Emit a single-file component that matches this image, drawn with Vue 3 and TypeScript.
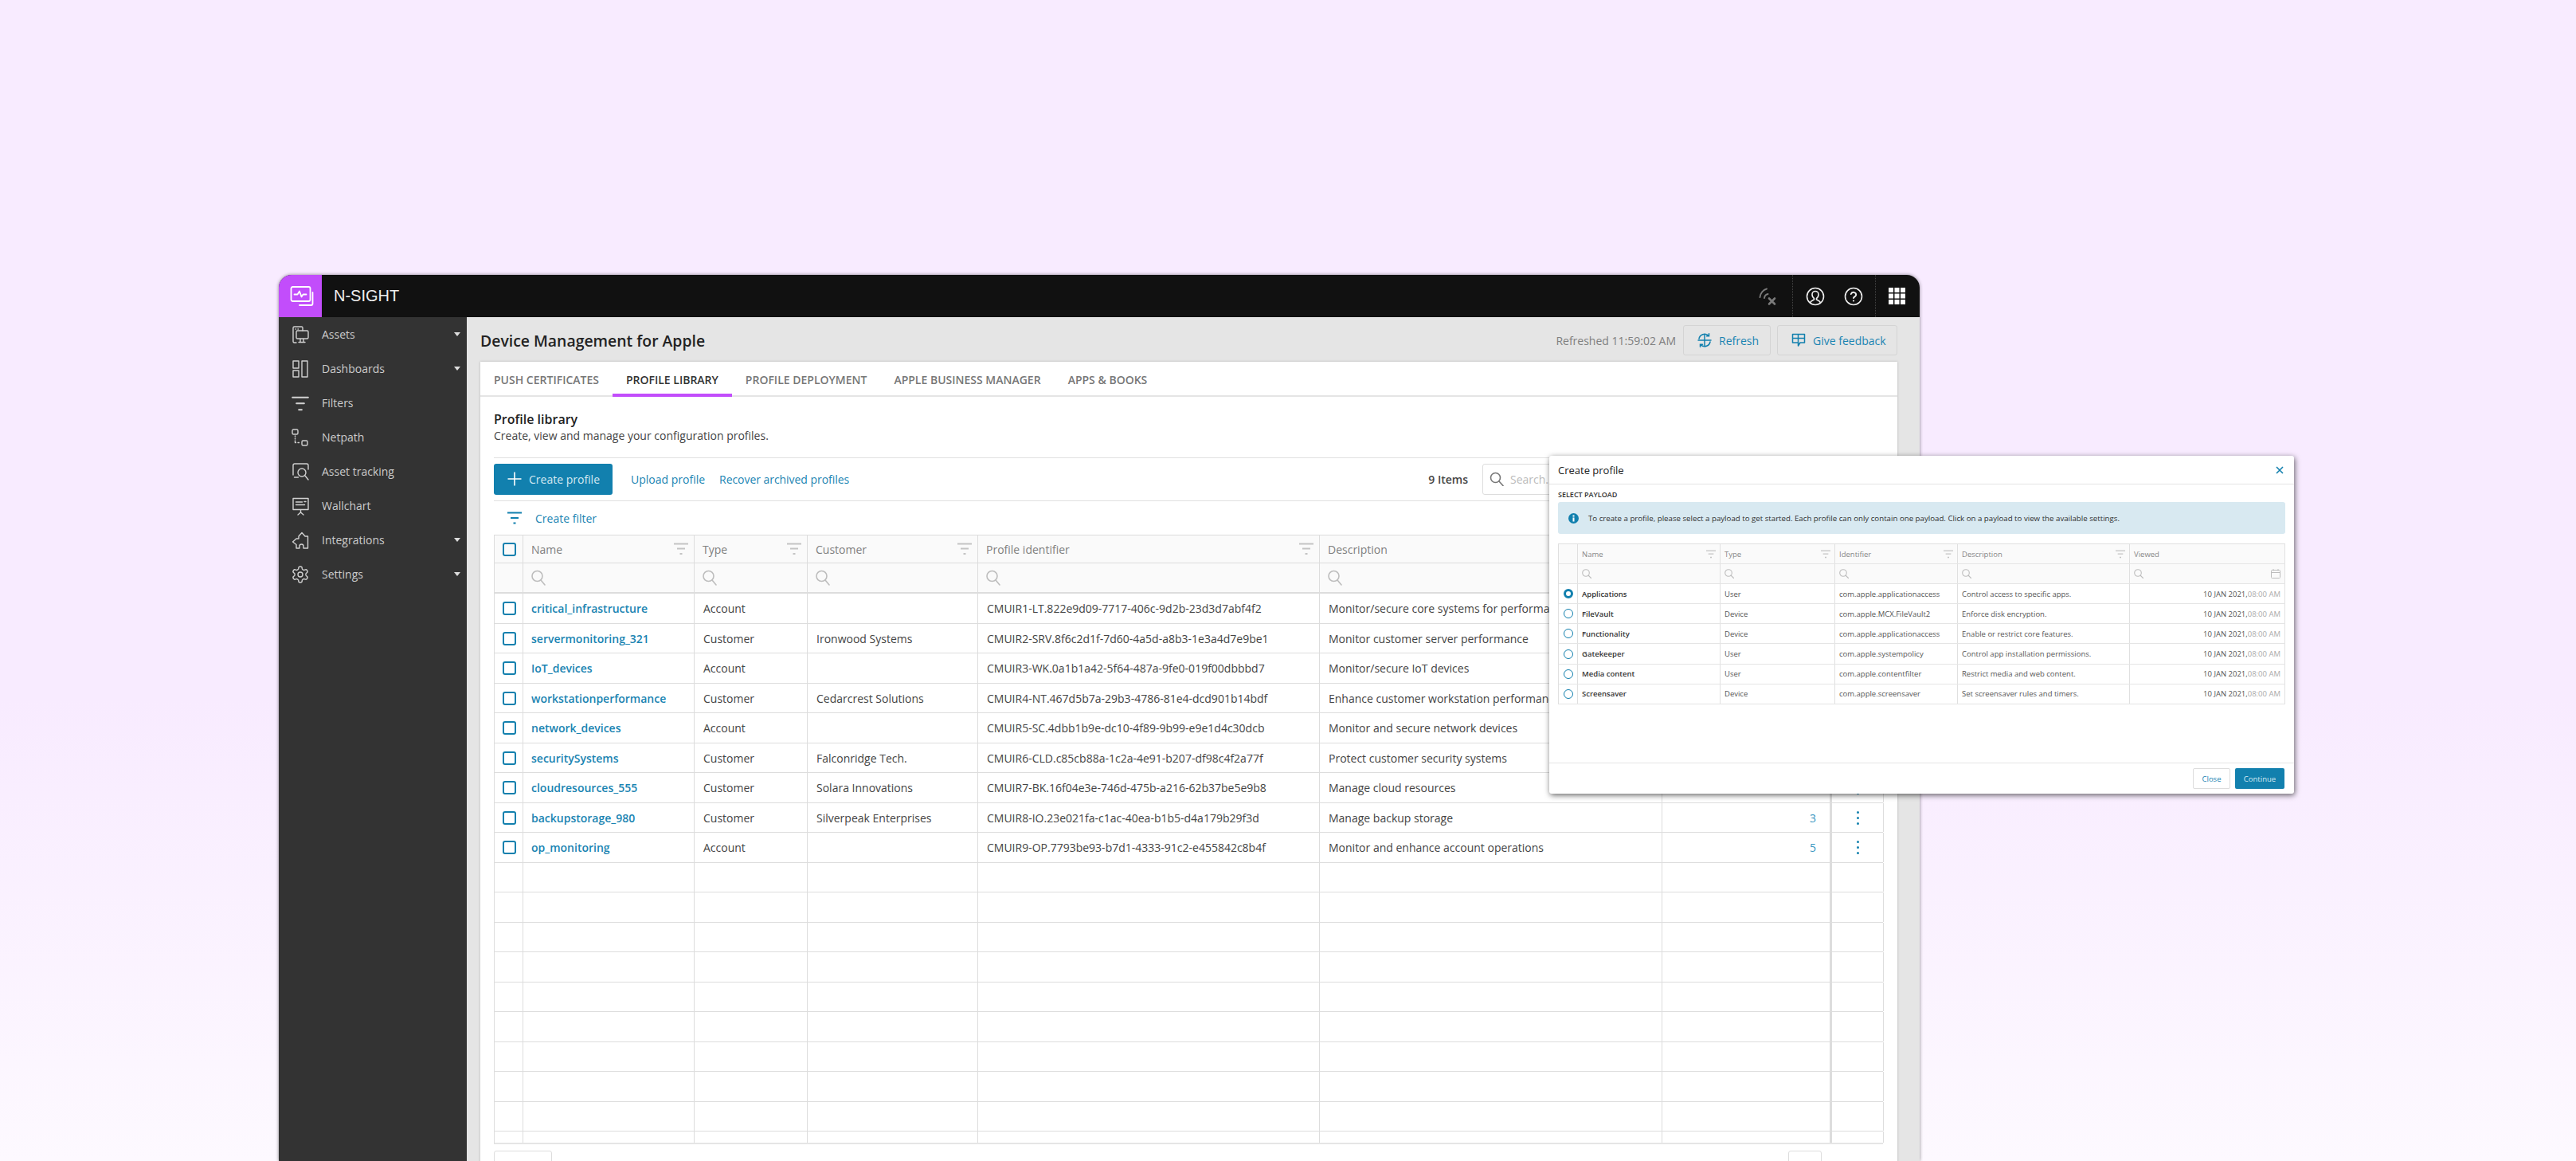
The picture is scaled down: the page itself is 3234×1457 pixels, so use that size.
<script setup lang="ts">
interface NavItem {
  label: string;
  caret: boolean;
  paths: string[];
}

interface Profile {
  name: string;
  type: string;
  customer: string;
  identifier: string;
  description: string;
  count: number;
}

interface Payload {
  name: string;
  type: string;
  identifier: string;
  description: string;
}

const gear =
  'M12.22 2h-.44a2 2 0 0 0-2 2v.18a2 2 0 0 1-1 1.73l-.43.25a2 2 0 0 1-2 0l-.15-.08a2 2 0 0 0-2.73.73l-.22.38a2 2 0 0 0 .73 2.73l.15.1a2 2 0 0 1 1 1.72v.51a2 2 0 0 1-1 1.74l-.15.09a2 2 0 0 0-.73 2.73l.22.38a2 2 0 0 0 2.73.73l.15-.08a2 2 0 0 1 2 0l.43.25a2 2 0 0 1 1 1.73V20a2 2 0 0 0 2 2h.44a2 2 0 0 0 2-2v-.18a2 2 0 0 1 1-1.73l.43-.25a2 2 0 0 1 2 0l.15.08a2 2 0 0 0 2.73-.73l.22-.39a2 2 0 0 0-.73-2.73l-.15-.08a2 2 0 0 1-1-1.74v-.5a2 2 0 0 1 1-1.74l.15-.09a2 2 0 0 0 .73-2.73l-.22-.38a2 2 0 0 0-2.73-.73l-.15.08a2 2 0 0 1-2 0l-.43-.25a2 2 0 0 1-1-1.73V4a2 2 0 0 0-2-2z';

const navItems: NavItem[] = [
  {
    label: 'Assets',
    caret: true,
    paths: [
      'M7 22H4.5A1.5 1.5 0 0 1 3 20.5v-17A1.5 1.5 0 0 1 4.5 2h9A1.5 1.5 0 0 1 15 3.5V7',
      'M8.5 7h12A1.5 1.5 0 0 1 22 8.5v7a1.5 1.5 0 0 1-1.5 1.5h-12A1.5 1.5 0 0 1 7 15.5v-7A1.5 1.5 0 0 1 8.5 7z',
      'M10 21.5h8',
      'M12 17.5v3.5',
      'M16 17.5v3.5',
      'M6 5h.5',
      'M9 5h.5',
    ],
  },
  {
    label: 'Dashboards',
    caret: true,
    paths: [
      'M3 2h7v9H3z',
      'M3 14h7v8H3z',
      'M14 2h7v20h-7z',
    ],
  },
  {
    label: 'Filters',
    caret: false,
    paths: ['M2 4.5h20', 'M2 5h20', 'M7 12h10', 'M7 12.5h10', 'M10 20h4', 'M10 20.5h4'],
  },
  {
    label: 'Netpath',
    caret: false,
    paths: [
      'M3.5 2h4A1.5 1.5 0 0 1 9 3.5v3A1.5 1.5 0 0 1 7.500 8h-4A1.500 1.500 0 0 1 2 6.500v-3A1.500 1.500 0 0 1 3.500 2z',
      'M15.500 16h4A1.500 1.500 0 0 1 21 17.500v3a1.500 1.500 0 0 1-1.500 1.500h-4a1.500 1.500 0 0 1-1.500-1.500v-3a1.500 1.500 0 0 1 1.500-1.500z',
      'M5.500 10v1',
      'M5.500 13v1',
      'M5.500 16v2.500h1',
      'M9 18.500h1.500',
    ],
  },
  {
    label: 'Asset tracking',
    caret: false,
    paths: [
      'M3 16V4a2 2 0 0 1 2-2h15a2 2 0 0 1 2 2v5',
      'M4.500 19h5',
      'M14 8a5 5 0 1 1 0 10a5 5 0 0 1 0-10z',
      'M18 17l4 5',
    ],
  },
  {
    label: 'Wallchart',
    caret: false,
    paths: [
      'M3 2.500h19v14H3z',
      'M6.500 7h8',
      'M6.500 10.500h11',
      'M17 6.500h2',
      'M12.500 17v3',
      'M9 23l3.500-3l3.500 3',
    ],
  },
  {
    label: 'Integrations',
    caret: true,
    paths: [
      'M7 22v-4.500L2.500 14L7 10h3V7l4-4.500L18 7h3.500v15H16v-2.500a2.500 2.500 0 0 0-5 0V22z',
    ],
  },
  {
    label: 'Settings',
    caret: true,
    paths: [gear, 'M12 9a3 3 0 1 1 0 6a3 3 0 0 1 0-6z'],
  },
];

const tabs = ['PUSH CERTIFICATES', 'PROFILE LIBRARY', 'PROFILE DEPLOYMENT', 'APPLE BUSINESS MANAGER', 'APPS & BOOKS'];

const profiles: Profile[] = [
  { name: 'critical_infrastructure', type: 'Account', customer: '', identifier: 'CMUIR1-LT.822e9d09-7717-406c-9d2b-23d3d7abf4f2', description: 'Monitor/secure core systems for performance', count: 4 },
  { name: 'servermonitoring_321', type: 'Customer', customer: 'Ironwood Systems', identifier: 'CMUIR2-SRV.8f6c2d1f-7d60-4a5d-a8b3-1e3a4d7e9be1', description: 'Monitor customer server performance', count: 2 },
  { name: 'IoT_devices', type: 'Account', customer: '', identifier: 'CMUIR3-WK.0a1b1a42-5f64-487a-9fe0-019f00dbbbd7', description: 'Monitor/secure IoT devices', count: 6 },
  { name: 'workstationperformance', type: 'Customer', customer: 'Cedarcrest Solutions', identifier: 'CMUIR4-NT.467d5b7a-29b3-4786-81e4-dcd901b14bdf', description: 'Enhance customer workstation performance', count: 3 },
  { name: 'network_devices', type: 'Account', customer: '', identifier: 'CMUIR5-SC.4dbb1b9e-dc10-4f89-9b99-e9e1d4c30dcb', description: 'Monitor and secure network devices', count: 2 },
  { name: 'securitySystems', type: 'Customer', customer: 'Falconridge Tech.', identifier: 'CMUIR6-CLD.c85cb88a-1c2a-4e91-b207-df98c4f2a77f', description: 'Protect customer security systems', count: 4 },
  { name: 'cloudresources_555', type: 'Customer', customer: 'Solara Innovations', identifier: 'CMUIR7-BK.16f04e3e-746d-475b-a216-62b37be5e9b8', description: 'Manage cloud resources', count: 1 },
  { name: 'backupstorage_980', type: 'Customer', customer: 'Silverpeak Enterprises', identifier: 'CMUIR8-IO.23e021fa-c1ac-40ea-b1b5-d4a179b29f3d', description: 'Manage backup storage', count: 3 },
  { name: 'op_monitoring', type: 'Account', customer: '', identifier: 'CMUIR9-OP.7793be93-b7d1-4333-91c2-e455842c8b4f', description: 'Monitor and enhance account operations', count: 5 },
];

const emptyRows = 9;

const mainColumns = [
  { label: 'Name', filter: true },
  { label: 'Type', filter: true },
  { label: 'Customer', filter: true },
  { label: 'Profile identifier', filter: true },
  { label: 'Description', filter: true },
];

const payloadColumns = [
  { label: 'Name', filter: true },
  { label: 'Type', filter: true },
  { label: 'Identifier', filter: true },
  { label: 'Description', filter: true },
];

const payloads: Payload[] = [
  { name: 'Applications', type: 'User', identifier: 'com.apple.applicationaccess', description: 'Control access to specific apps.' },
  { name: 'FileVault', type: 'Device', identifier: 'com.apple.MCX.FileVault2', description: 'Enforce disk encryption.' },
  { name: 'Functionality', type: 'Device', identifier: 'com.apple.applicationaccess', description: 'Enable or restrict core features.' },
  { name: 'Gatekeeper', type: 'User', identifier: 'com.apple.systempolicy', description: 'Control app installation permissions.' },
  { name: 'Media content', type: 'User', identifier: 'com.apple.contentfilter', description: 'Restrict media and web content.' },
  { name: 'Screensaver', type: 'Device', identifier: 'com.apple.screensaver', description: 'Set screensaver rules and timers.' },
];
</script>

<template>
  <div class="page">
    <div class="window">
      <!-- Top bar -->
      <header class="topbar">
        <div class="logo">
          <svg width="30" height="28" viewBox="0 0 30 28" fill="none" stroke="#fff" stroke-width="1.8" stroke-linecap="round" stroke-linejoin="round">
            <rect x="1.500" y="2" width="24" height="18" rx="2" />
            <path d="M5.500 11.500h4l2.500-4 2.500 7 2-3h4" />
            <path d="M28.500 9v14a2 2 0 0 1-2 2H12" />
          </svg>
        </div>
        <span class="brand">N-SIGHT</span>
        <div class="top-icons">
          <svg class="top-wifi" width="24" height="24" viewBox="0 0 24 24" fill="none" stroke="#7a7a7a" stroke-linecap="round">
            <path stroke-width="2" d="M1.500 13C2 8 5.500 3.500 10 2.500" />
            <path stroke-width="2" d="M7 14c.3-2.500 2-4.500 4.500-5" />
            <path stroke-width="2.600" d="M13 14.500l7 7M20 14.500l-7 7" />
          </svg>
          <span class="top-sep"></span>
          <svg class="top-user" width="24" height="24" viewBox="0 0 24 24" fill="none" stroke="#eee" stroke-width="1.600">
            <circle cx="12" cy="12" r="10.500" />
            <path d="M5.500 20c.5-2.500 3.500-3 5-4v-1.500C9 13.500 8 11.500 8 9.500a4 4 0 0 1 8 0c0 2-1 4-2.500 5V16c1.500 1 4.500 1.500 5 4" />
          </svg>
          <svg class="top-help" width="24" height="24" viewBox="0 0 24 24" fill="none" stroke="#eee" stroke-width="1.600" stroke-linecap="round">
            <circle cx="12" cy="12" r="10.500" />
            <path stroke-width="2" d="M8.800 9a3.300 3.300 0 0 1 6.400 1c0 2-3.200 2.500-3.200 4" />
            <path stroke-width="2.200" d="M12 17.500h.01" />
          </svg>
          <span class="top-sep"></span>
          <svg class="top-grid" width="21" height="21" viewBox="0 0 21 21" fill="#fff">
            <template v-for="row in 3" :key="row">
              <rect v-for="col in 3" :key="col" :x="(col - 1) * 7.500" :y="(row - 1) * 7.500" width="6" height="6" />
            </template>
          </svg>
        </div>
      </header>

      <div class="body">
        <!-- Sidebar -->
        <nav class="sidebar">
          <a v-for="item in navItems" :key="item.label" class="nav-item">
            <svg width="24" height="24" viewBox="0 0 24 24" fill="none" stroke="#d0d0d0" stroke-width="1.400" stroke-linecap="round" stroke-linejoin="round">
              <path v-for="d in item.paths" :key="d" :d="d" />
            </svg>
            <span class="nav-label">{{ item.label }}</span>
            <span v-if="item.caret" class="nav-caret"></span>
          </a>
        </nav>

        <!-- Main content -->
        <main class="main">
          <div class="main-head">
            <h1 class="main-title">Device Management for Apple</h1>
            <span class="refreshed">Refreshed 11:59:02 AM</span>
            <button class="ghost-btn refresh-btn">
              <svg width="18" height="18" viewBox="0 0 18 18" fill="none" stroke="#1280ae" stroke-width="1.500" stroke-linecap="round">
                <path d="M2 7a7.200 7.200 0 0 1 11.500-4.200" />
                <path d="M16 11a7.200 7.200 0 0 1-11.500 4.200" />
                <path d="M1 9h16M9 1.500v15" />
                <path d="M14.500 .8v3h-3M3.500 17.200v-3h3" />
              </svg>
              Refresh
            </button>
            <button class="ghost-btn feedback-btn">
              <svg width="18" height="18" viewBox="0 0 18 18" fill="none" stroke="#1280ae" stroke-width="1.500" stroke-linejoin="round">
                <path d="M1.500 1.500h15v10.500H11l-2.500 4v-4h-7z" />
                <path d="M1.500 6.500h15M8.500 1.500v11" />
              </svg>
              Give feedback
            </button>
          </div>

          <section class="card">
            <div class="tabs">
              <a v-for="tab in tabs" :key="tab" class="tab" :class="{ active: tab === 'PROFILE LIBRARY' }">{{ tab }}</a>
            </div>

            <div class="card-body">
              <h2 class="card-title">Profile library</h2>
              <p class="card-sub">Create, view and manage your configuration profiles.</p>

              <div class="toolbar">
                <button class="primary-btn">
                  <svg width="18" height="18" viewBox="0 0 18 18" stroke="#fff" stroke-width="1.600">
                    <path d="M9 .5v17M.5 9h17" />
                  </svg>
                  Create profile
                </button>
                <a class="link upload">Upload profile</a>
                <a class="link recover">Recover archived profiles</a>
                <span class="items">9 Items</span>
                <div class="search">
                  <svg width="18" height="18" viewBox="0 0 18 18" fill="none" stroke="#777" stroke-width="1.600" stroke-linecap="round">
                    <circle cx="7.500" cy="7.500" r="6" />
                    <path d="M12 12l5 5.500" />
                  </svg>
                  <span>Search...</span>
                </div>
              </div>

              <div class="filter-bar">
                <svg width="18" height="16" viewBox="0 0 18 16" stroke="#1280ae" stroke-width="2">
                  <path d="M0 1.500h18M4 8h10M7.500 14.500h3" />
                </svg>
                <a class="link">Create filter</a>
              </div>

              <div class="grid">
                <div class="grid-row head-row">
                  <div class="cell check-cell"><span class="check"></span></div>
                  <div v-for="col in mainColumns" :key="col.label" class="cell head-cell">
                    {{ col.label }}
                    <svg class="filter-icon" width="18" height="16" viewBox="0 0 18 16" stroke="#c4c4c4" stroke-width="2">
                      <path d="M0 1.500h18M4 7.500h10M7.500 14h3" />
                    </svg>
                  </div>
                  <div class="cell head-cell"></div>
                  <div class="cell action-cell"></div>
                </div>
                <div class="grid-row search-row">
                  <div class="cell check-cell"></div>
                  <div v-for="n in 6" :key="n" class="cell search-cell">
                    <svg width="18" height="20" viewBox="0 0 18 20" fill="none" stroke="#bdbdbd" stroke-width="1.600" stroke-linecap="round">
                      <circle cx="7.500" cy="8" r="6.500" />
                      <path d="M12 13l5 6" />
                    </svg>
                  </div>
                  <div class="cell action-cell"></div>
                </div>
                <div v-for="p in profiles" :key="p.identifier" class="grid-row data-row">
                  <div class="cell check-cell"><span class="check"></span></div>
                  <div class="cell name-cell">{{ p.name }}</div>
                  <div class="cell">{{ p.type }}</div>
                  <div class="cell">{{ p.customer }}</div>
                  <div class="cell">{{ p.identifier }}</div>
                  <div class="cell">{{ p.description }}</div>
                  <div class="cell count-cell">{{ p.count }}</div>
                  <div class="cell action-cell">
                    <span class="kebab"><i></i><i></i><i></i></span>
                  </div>
                </div>
                <div v-for="n in emptyRows" :key="n" class="grid-row data-row">
                  <div v-for="c in 7" :key="c" class="cell"></div>
                  <div class="cell action-cell"></div>
                </div>
                <div class="grid-row stub-row">
                  <div v-for="c in 7" :key="c" class="cell"></div>
                  <div class="cell action-cell"></div>
                </div>
              </div>

              <div class="pager">
                <button class="page-btn first"></button>
                <button class="page-btn last"></button>
              </div>
            </div>
          </section>
        </main>
      </div>
    </div>

    <!-- Create profile modal -->
    <div class="modal">
      <div class="modal-head">
        <span class="modal-title">Create profile</span>
        <svg width="10" height="10" viewBox="0 0 10 10" stroke="#1280ae" stroke-width="1.600">
          <path d="M1 1l8 8M9 1l-8 8" />
        </svg>
      </div>
      <div class="modal-body">
        <div class="modal-label">SELECT PAYLOAD</div>
        <div class="banner">
          <svg width="13" height="13" viewBox="0 0 13 13">
            <circle cx="6.500" cy="6.500" r="6.500" fill="#1280ae" />
            <rect x="5.500" y="5.500" width="2" height="5" fill="#fff" />
            <rect x="5.500" y="2.500" width="2" height="2" fill="#fff" />
          </svg>
          <span>To create a profile, please select a payload to get started. Each profile can only contain one payload. Click on a payload to view the available settings.</span>
        </div>

        <div class="ptable">
          <div class="prow p-head">
            <div class="pcell"></div>
            <div v-for="col in payloadColumns" :key="col.label" class="pcell p-head-cell">
              {{ col.label }}
              <svg class="filter-icon small" width="12" height="11" viewBox="0 0 18 16" stroke="#c4c4c4" stroke-width="2">
                <path d="M0 1.500h18M4 7.500h10M7.500 14h3" />
              </svg>
            </div>
            <div class="pcell p-head-cell">Viewed</div>
          </div>
          <div class="prow p-head">
            <div class="pcell"></div>
            <div v-for="n in 5" :key="n" class="pcell p-search">
              <svg width="12" height="12" viewBox="0 0 12 12" fill="none" stroke="#bdbdbd" stroke-width="1.100" stroke-linecap="round">
                <circle cx="5" cy="5" r="4.300" />
                <path d="M8 8l3.500 3.500" />
              </svg>
              <svg v-if="n === 5" class="calendar" width="12" height="12" viewBox="0 0 12 12" fill="none" stroke="#bdbdbd" stroke-width="1">
                <rect x=".5" y="1.500" width="11" height="10" rx="1" />
                <path d="M.5 4.500h11M3 0v2.500M9 0v2.500" />
              </svg>
            </div>
          </div>
          <div v-for="(pl, i) in payloads" :key="pl.name" class="prow">
            <div class="pcell radio-cell"><span class="radio" :class="{ on: i === 0 }"></span></div>
            <div class="pcell pl-name">{{ pl.name }}</div>
            <div class="pcell">{{ pl.type }}</div>
            <div class="pcell">{{ pl.identifier }}</div>
            <div class="pcell">{{ pl.description }}</div>
            <div class="pcell date-cell">10 JAN 2021,<span class="time">08:00 AM</span></div>
          </div>
        </div>
      </div>
      <div class="modal-foot">
        <button class="foot-close">Close</button>
        <button class="foot-continue">Continue</button>
      </div>
    </div>
  </div>
</template>

<style>
body {
  margin: 0;
}
</style>

<style scoped>
.page {
  position: relative;
  width: 3234px;
  height: 1457px;
  overflow: hidden;
  padding: 345px 0 0 350px;
  box-sizing: border-box;
  background: linear-gradient(#f8ebff 0, #f8ebff 60%, #fdf9ff 100%);
  font-family: "Open Sans", sans-serif;
  font-size: 14px;
  color: #444;
}

.window {
  width: 2060px;
  height: 1112px;
  border-radius: 16px 16px 0 0;
  overflow: hidden;
  box-shadow: 0 0 4px rgba(0, 0, 0, 0.45);
  display: flex;
  flex-direction: column;
}

/* top bar */
.topbar {
  flex: none;
  height: 53px;
  background: #111;
  display: flex;
  align-items: center;
}

.logo {
  width: 54px;
  height: 100%;
  background: #c24dfb;
  display: flex;
  align-items: center;
  justify-content: center;
  padding-left: 4px;
  box-sizing: border-box;
}

.brand {
  margin-left: 15px;
  font-family: "Liberation Sans", sans-serif;
  font-size: 20px;
  color: #eee;
}

.top-icons {
  margin-left: auto;
  height: 100%;
  display: flex;
  align-items: center;
}

.top-wifi {
  margin-right: 18px;
}

.top-sep {
  width: 0;
  height: 100%;
  border-left: 1px dotted #444;
}

.top-user {
  margin-left: 16px;
}

.top-help {
  margin-left: 24px;
  margin-right: 15px;
}

.top-grid {
  margin-left: 16px;
  margin-right: 18px;
}

.body {
  flex: 1;
  min-height: 0;
  display: flex;
}

/* sidebar */
.sidebar {
  flex: none;
  width: 236px;
  background: #333;
  box-sizing: border-box;
}

.nav-item {
  height: 43px;
  display: flex;
  align-items: center;
  padding: 0 8px 0 15px;
  color: #ccc;
}

.nav-label {
  margin-left: 15px;
}

.nav-caret {
  margin-left: auto;
  border-left: 4px solid transparent;
  border-right: 4px solid transparent;
  border-top: 5px solid #ddd;
}

/* main */
.main {
  flex: 1;
  min-width: 0;
  background: #e5e5e5;
  padding: 10px 28px 0 17px;
  box-sizing: border-box;
  display: flex;
  flex-direction: column;
}

.main-head {
  flex: none;
  height: 38px;
  margin-bottom: 8px;
  display: flex;
  align-items: center;
}

.main-title {
  margin: 0;
  font-size: 19.400px;
  font-weight: 600;
  color: #222;
}

.refreshed {
  margin-left: auto;
  margin-right: 9px;
  color: #808080;
}

.ghost-btn {
  height: 38px;
  padding: 0 0 0 17px;
  background: #e5e5e5;
  border: 1px solid #d4d4d4;
  border-radius: 3px;
  display: flex;
  align-items: center;
  gap: 9px;
  box-sizing: border-box;
  font: inherit;
  color: #1a84b2;
}

.refresh-btn {
  width: 110px;
}

.feedback-btn {
  width: 151px;
  margin-left: 8px;
}

.card {
  flex: 1;
  background: #fff;
  box-shadow: 0 0 3px rgba(0, 0, 0, 0.2);
}

.tabs {
  height: 44px;
  display: flex;
  border-bottom: 2px solid #e5e5e5;
  box-sizing: border-box;
}

.tab {
  height: 44px;
  padding: 0 17px;
  box-sizing: border-box;
  display: flex;
  align-items: center;
  font-size: 14px;
  font-weight: 600;
  color: #777;
}

.tab.active {
  color: #333;
  border-bottom: 4px solid #c24dfb;
  padding-top: 4px;
}

.card-body {
  padding: 18px 18px 0 17px;
}

.card-title {
  margin: 0;
  font-size: 16px;
  line-height: 21px;
  font-weight: 600;
  color: #222;
}

.card-sub {
  margin: 0;
  line-height: 20px;
  color: #444;
}

.toolbar {
  margin-top: 17px;
  height: 55px;
  padding: 7px 0 8px;
  box-sizing: border-box;
  border-top: 1px solid #e0e0e0;
  border-bottom: 1px solid #e0e0e0;
  display: flex;
  align-items: center;
}

.primary-btn {
  width: 149px;
  height: 39px;
  padding: 0 0 0 17px;
  background: #1280ae;
  border: none;
  border-radius: 3px;
  display: flex;
  align-items: center;
  gap: 9px;
  font: inherit;
  color: #d5e9f2;
}

.link {
  color: #1a84b2;
}

.upload {
  margin: 0 18px 0 23px;
}

.recover {
  letter-spacing: -0.05px;
}

.items {
  margin-left: auto;
  margin-right: 18px;
  font-weight: 600;
  color: #444;
}

.search {
  width: 503px;
  height: 39px;
  box-sizing: border-box;
  border: 1px solid #ddd;
  border-radius: 3px;
  padding-left: 8px;
  display: flex;
  align-items: center;
  gap: 8px;
  color: #bbb;
}

.filter-bar {
  height: 42px;
  padding-left: 17px;
  display: flex;
  align-items: center;
  gap: 17px;
}

/* profile grid */
.grid {
  border-left: 1px solid #ddd;
  border-top: 1px solid #ddd;
  border-bottom: 2px solid #e5e5e5;
}

.grid-row {
  display: grid;
  grid-template-columns: 36px 215px 142px 214px 429px 430px 211px 67px;
  box-sizing: border-box;
}

.head-row {
  height: 35px;
  background: #fafafa;
  border-bottom: 1px solid #ddd;
}

.search-row {
  height: 38px;
  background: #fafafa;
  border-bottom: 2px solid #ddd;
}

.data-row {
  height: 37.500px;
  border-bottom: 1px solid #ddd;
}

.stub-row {
  height: 14px;
}

.cell {
  position: relative;
  box-sizing: border-box;
  padding: 0 11px;
  border-right: 1px solid #ddd;
  display: flex;
  align-items: center;
  white-space: nowrap;
  overflow: hidden;
}

.data-row .cell {
  padding-top: 1px;
}

.check-cell {
  padding: 0 0 0 10px;
}

.check {
  width: 17px;
  height: 17px;
  box-sizing: border-box;
  border: 2px solid #1280ae;
  border-radius: 3px;
}

.head-cell {
  padding-left: 10px;
  font-weight: 500;
  color: #808080;
}

.filter-icon {
  margin-left: auto;
  margin-right: -4px;
}

.search-cell {
  padding-left: 10px;
}

.name-cell {
  padding-left: 10px;
  font-weight: 600;
  color: #1a84b2;
}

.count-cell {
  justify-content: flex-end;
  padding-right: 17px;
  color: #3a96bf;
}

.action-cell {
  border-left: 2px solid #ddd;
  justify-content: center;
}

.kebab {
  display: flex;
  flex-direction: column;
  gap: 4px;
}

.kebab i {
  width: 3px;
  height: 3px;
  border-radius: 50%;
  background: #1280ae;
}

.pager {
  padding-top: 8px;
  display: flex;
  justify-content: space-between;
}

.page-btn {
  height: 36px;
  background: #fff;
  border: 1px solid #ddd;
  border-radius: 3px;
}

.page-btn.first {
  width: 73px;
}

.page-btn.last {
  width: 42px;
  margin-right: 77px;
}

/* modal */
.modal {
  position: absolute;
  left: 1945px;
  top: 572px;
  width: 935px;
  height: 424px;
  background: #fff;
  border-radius: 3px;
  box-shadow: 1px 2px 7px rgba(0, 0, 0, 0.6);
  display: flex;
  flex-direction: column;
  font-size: 9.500px;
}

.modal-head {
  flex: none;
  height: 35px;
  padding: 0 13px 0 11px;
  border-bottom: 1px solid #e5e5e5;
  display: flex;
  align-items: center;
  justify-content: space-between;
}

.modal-title {
  font-size: 13px;
  color: #222;
}

.modal-body {
  flex: 1;
  padding: 5px 11px 0;
}

.modal-label {
  font-size: 9px;
  line-height: 16px;
  font-weight: 600;
  color: #333;
}

.banner {
  height: 40px;
  margin-top: 1px;
  padding-left: 13px;
  background: #d8e9f1;
  border-radius: 3px;
  display: flex;
  align-items: center;
  gap: 12px;
  font-size: 9.700px;
  font-weight: 500;
  color: #333;
}

.ptable {
  margin-top: 12px;
  border-left: 1px solid #e0e0e0;
  border-top: 1px solid #e0e0e0;
  width: 913px;
  box-sizing: border-box;
}

.prow {
  height: 25.100px;
  box-sizing: border-box;
  display: grid;
  grid-template-columns: 24px 179px 144px 154px 216px 195px;
  border-bottom: 1px solid #e5e5e5;
}

.p-head {
  background: #fafafa;
}

.pcell {
  position: relative;
  box-sizing: border-box;
  padding: 0 5px;
  border-right: 1px solid #e0e0e0;
  display: flex;
  align-items: center;
  white-space: nowrap;
  overflow: hidden;
  color: #555;
}

.p-head-cell {
  color: #888;
}

.filter-icon.small {
  margin-right: 0;
}

.calendar {
  margin-left: auto;
}

.radio-cell {
  padding: 0;
  justify-content: center;
}

.radio {
  width: 12px;
  height: 12px;
  box-sizing: border-box;
  border: 1.600px solid #1280ae;
  border-radius: 50%;
}

.radio.on {
  border: 3.500px solid #1280ae;
  background: #fff;
}

.pl-name {
  font-weight: 600;
  color: #333;
}

.date-cell {
  justify-content: flex-end;
}

.time {
  color: #aaa;
}

.modal-foot {
  flex: none;
  height: 39px;
  padding-top: 6px;
  box-sizing: border-box;
  border-top: 1px solid #e5e5e5;
  padding-right: 12px;
  display: flex;
  justify-content: flex-end;
  gap: 6px;
}

.foot-close,
.foot-continue {
  height: 26px;
  padding: 0;
  border-radius: 2px;
  font: inherit;
}

.foot-close {
  width: 47px;
  background: #fff;
  border: 1px solid #ddd;
  color: #1a84b2;
}

.foot-continue {
  width: 62px;
  background: #1280ae;
  border: none;
  color: #d5e9f2;
}
</style>
